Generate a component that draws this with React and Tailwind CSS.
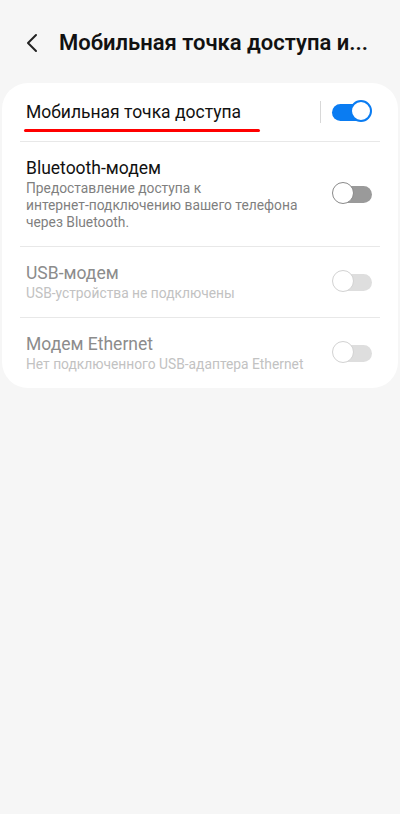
import React from 'react';

function Toggle({ on, disabled }) {
    if (on) {
        return (
            <div className="relative w-[40px] h-[24px] flex items-center">
                <div className="w-[38px] h-[17px] rounded-full bg-[#0a7cf2]" />
                <div className="absolute right-0 top-0 w-[22px] h-[22px] rounded-full bg-white border-2 border-[#0a7cf2]" />
            </div>
        );
    }
    const track = disabled ? 'bg-[#dedede]' : 'bg-[#9a9a9a]';
    const knob = disabled ? 'border-[#d2d2d2]' : 'border-[#8a8a8a]';
    return (
        <div className="relative w-[40px] h-[24px] flex items-center justify-end">
            <div className={`w-[30px] h-[17px] rounded-r-full ${track}`} />
            <div className={`absolute left-0 top-0 w-[22px] h-[22px] rounded-full bg-white border-[1.5px] ${knob}`} />
        </div>
    );
}

function Row({ title, subtitle, disabled, last }) {
    return (
        <div className={`flex items-center mx-[18px] pl-[6px] pr-[8px] py-[15px] ${last ? '' : 'border-b border-[#e8e8e8]'}`}>
            <div className="flex-1 pr-4">
                <div className={`text-[17.5px] leading-[22px] ${disabled ? 'text-[#8c8c8c]' : 'text-[#111]'}`}>{title}</div>
                <div className={`mt-[1px] text-[13.8px] leading-[17px] ${disabled ? 'text-[#c2c2c2]' : 'text-[#7f7f7f]'}`}>{subtitle}</div>
            </div>
            <Toggle disabled={disabled} />
        </div>
    );
}

export default function App() {
    return (
        <div className="min-h-[814px] bg-[#f6f6f6]" style={{ fontFamily: 'Roboto, "Noto Sans", sans-serif' }}>
            <div className="flex items-center h-[83px] pt-[2px] pl-[26px] pr-4">
                <svg width="14" height="20" viewBox="0 0 14 20" fill="none" stroke="#222" strokeWidth="2" strokeLinecap="round" strokeLinejoin="round">
                    <path d="M10 2 L2 10 L10 18" />
                </svg>
                <h1 className="ml-[19px] text-[22px] font-semibold text-[#111] whitespace-nowrap">
                    Мобильная точка доступа и...
                </h1>
            </div>

            <div className="mx-[2px] bg-white rounded-[26px]">
                <div className="relative flex items-center mx-[18px] pl-[6px] pr-[8px] h-[59px] border-b border-[#e8e8e8]">
                    <div className="flex-1 text-[17.5px] text-[#111]">Мобильная точка доступа</div>
                    <div className="w-px h-[22px] bg-[#d8d8d8] mr-[11px]" />
                    <Toggle on />
                    <div className="absolute left-[4px] top-[46px] w-[236px] h-[3px] rounded-full bg-[#ff0000]" />
                </div>
                <Row
                    title="Bluetooth-модем"
                    subtitle={<>Предоставление доступа к <span className="whitespace-nowrap">интернет-подключению</span> вашего телефона через Bluetooth.</>}
                />
                <Row title="USB-модем" subtitle="USB-устройства не подключены" disabled />
                <Row title="Модем Ethernet" subtitle="Нет подключенного USB-адаптера Ethernet" disabled last />
            </div>
        </div>
    );
}
